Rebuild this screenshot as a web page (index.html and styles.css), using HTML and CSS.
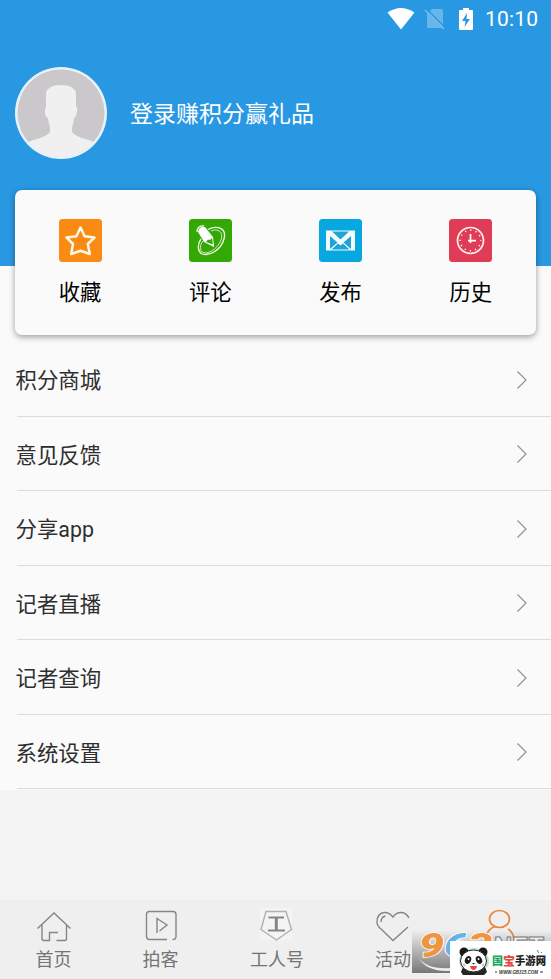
FILE: index.html
```html
<!DOCTYPE html>
<html lang="zh-CN">
<head>
<meta charset="utf-8">
<title>我的</title>
<link rel="stylesheet" href="styles.css">
</head>
<body>
<div class="app">
  <header class="hero">
    <div class="status">
      <svg class="wifi" width="28" height="22" viewBox="0 0 28 22"><path d="M.5 4.500Q14-4.500 27.500 4.500L14 21.500Z" fill="#fff"/></svg>
      <svg class="sim" width="22" height="22" viewBox="0 0 22 22"><path d="M8 1h9q2 0 2 2v17H3V6z" fill="#69b5eb"/><path d="M2.500 1L21.500 20" stroke="#2998e2" stroke-width="1.500"/><path d="M1 2L20 21" stroke="#78b9e9" stroke-width="1.600"/></svg>
      <svg class="battery" width="16" height="24" viewBox="0 0 16 24"><path d="M5 1h6v2h3q1 0 1 1v18q0 1-1 1H2q-1 0-1-1V4q0-1 1-1h3z" fill="#fff"/><path d="M9 6L4 14h3.500L6.500 20 12 12H8.500z" fill="#2998e2"/></svg>
      <span class="time">10:10</span>
    </div>
    <div class="profile">
      <svg class="avatar" width="92" height="92" viewBox="0 0 92 92">
        <defs><clipPath id="face"><circle cx="46" cy="46" r="44"/></clipPath></defs>
        <circle cx="46" cy="46" r="46" fill="#e7f1f8"/>
        <circle cx="46" cy="46" r="43.500" fill="#cbc8cb"/>
        <path clip-path="url(#face)" d="M31 26Q33 18 46 18T61 26V40Q63 40 62 45T59 51Q58 58 57 60V65Q60 69 70 72Q78 74 82 77V92H10V77Q14 74 22 72Q32 69 35 65V60Q34 58 33 51Q30 50 30 45T31 40Z" fill="#f0f0f0"/>
      </svg>
      <span class="login">登录赚积分赢礼品</span>
    </div>
  </header>

  <section class="card">
    <div class="action">
      <svg width="43" height="43" viewBox="0 0 43 43"><rect width="43" height="43" rx="3.500" fill="#f98b12"/><path d="M21.500 8.500L25.600 17.200 35.500 18.500 28.800 25 30.800 35 21.500 31.700 12.200 35 14 25 7.500 18.500 17.400 17.200Z" fill="none" stroke="#fff7e9" stroke-width="2.500" stroke-linejoin="round"/></svg>
      <span>收藏</span>
    </div>
    <div class="action">
      <svg width="43" height="43" viewBox="0 0 43 43"><rect width="43" height="43" rx="3.500" fill="#34a805"/><g fill="none" stroke="#effbe9"><path d="M19 10.500C28 6 38 9 35 20 32 31 20 38 12 34.500 8 31 9 24 12 20" stroke-width="1.300"/><path d="M22 12C29 9 35 13 32 21 28 31 18 36 13 33 10 29 12 24 14 22" stroke-width=".8"/><path d="M8 13Q8 6.500 15 7" stroke-width="1.300"/></g><path d="M9 13Q10 7 16 8L24 18 25 28 15 23Z" fill="#fff"/><path d="M17 23L19 20.500 21 21 23 19 24 25.500Z" fill="#34a805"/><path d="M22.500 25.500L25 24V28Z" fill="#fff"/></svg>
      <span>评论</span>
    </div>
    <div class="action">
      <svg width="43" height="43" viewBox="0 0 43 43"><rect width="43" height="43" rx="3.500" fill="#07a7df"/><path d="M7 11.500h29v20H7z" fill="#f4fbfe"/><path d="M11 17V30L18.500 23.500ZM32 17V30L24.500 23.500ZM13 12.500H30L21.500 20.500ZM12.500 30.500L19 24.500 21.500 26.500 24 24.500 30.500 30.500Z" fill="#20a4d8"/></svg>
      <span>发布</span>
    </div>
    <div class="action">
      <svg width="43" height="43" viewBox="0 0 43 43"><rect width="43" height="43" rx="3.500" fill="#e13c55"/><circle cx="21.500" cy="21.500" r="13" fill="none" stroke="#fff0f1" stroke-width="1.700"/><circle cx="21.500" cy="21.500" r="10.300" fill="none" stroke="#fff" stroke-width="1.500" stroke-dasharray="1.200 4.193" stroke-dashoffset=".6"/><path d="M21.500 15V24M19 21.700H27" stroke="#fff" stroke-width="1.700"/></svg>
      <span>历史</span>
    </div>
  </section>

  <nav class="menu">
    <div class="row"><span>积分商城</span><svg class="chevron" width="12" height="20" viewBox="0 0 12 20"><path d="M1.500 1.500L10 10 1.500 18.500"/></svg></div>
    <div class="row"><span>意见反馈</span><svg class="chevron" width="12" height="20" viewBox="0 0 12 20"><path d="M1.500 1.500L10 10 1.500 18.500"/></svg></div>
    <div class="row"><span>分享app</span><svg class="chevron" width="12" height="20" viewBox="0 0 12 20"><path d="M1.500 1.500L10 10 1.500 18.500"/></svg></div>
    <div class="row"><span>记者直播</span><svg class="chevron" width="12" height="20" viewBox="0 0 12 20"><path d="M1.500 1.500L10 10 1.500 18.500"/></svg></div>
    <div class="row"><span>记者查询</span><svg class="chevron" width="12" height="20" viewBox="0 0 12 20"><path d="M1.500 1.500L10 10 1.500 18.500"/></svg></div>
    <div class="row"><span>系统设置</span><svg class="chevron" width="12" height="20" viewBox="0 0 12 20"><path d="M1.500 1.500L10 10 1.500 18.500"/></svg></div>
  </nav>

  <footer class="tabs">
    <div class="tab"><svg width="36" height="34" viewBox="0 0 36 34"><path d="M1.500 20.500L18 5 34.500 20.500M6 17V30.500Q6 32.500 8 32.500H13.500V24.500H22M30.500 17V30.500Q30.500 32.500 28.500 32.500H20.500"/></svg><span>首页</span></div>
    <div class="tab"><svg width="36" height="34" viewBox="0 0 36 34"><path d="M24 31.500H6.500Q3.500 31.500 3.500 28.500V6.500Q3.500 3.500 6.500 3.500H30Q33 3.500 33 6.500V28.500Q33 31.500 29.500 31.500M14 25V10.500L24 17 16.500 23"/></svg><span>拍客</span></div>
    <div class="tab"><svg width="36" height="34" viewBox="0 0 36 34"><path d="M1 0H33V32H1z" fill="#f4f4f4" stroke="none"/><path d="M7 3.500H27L32.500 21.500 17.500 32 2 21.500Z" stroke="#b0b0b0"/><path d="M9.500 9.500H25M9 22.500H26" stroke-width="2.200"/><path d="M17.300 9.500V22" stroke-width="3"/></svg><span>工人号</span></div>
    <div class="tab"><svg width="36" height="34" viewBox="0 0 36 34"><path d="M34 10Q31 4.500 26 4.500 21 4.500 18 9 14 4 9 4.500 2 5.500 2 14 2 18 6 21L18 32.500 33 19M6 14Q6 9 10.500 8"/></svg><span>活动</span></div>
    <div class="tab mine"><svg width="36" height="34" viewBox="0 0 36 34"><ellipse cx="18.500" cy="11" rx="10" ry="8.500"/><path d="M14 18.500Q8 20.500 6 26M27 21Q32 24 33 31"/></svg></div>
  </footer>

  <div class="mark-963">
    <svg width="139" height="43" viewBox="0 0 139 43">
      <defs><linearGradient id="shade" x1="0" y1="0" x2="0" y2="1"><stop offset="0" stop-color="#777" stop-opacity="0"/><stop offset="1" stop-color="#777"/></linearGradient></defs>
      <path d="M0 0H139V43H0z" fill="url(#shade)"/>
      <path d="M6 27Q16 42 48 37V40Q16 45 6 27Z" fill="#eee"/>
      <g class="digits"><text x="7" y="26.500" fill="#ee963f" textLength="25" lengthAdjust="spacingAndGlyphs">9</text><text x="32" y="26.500" fill="#65b3e5" textLength="25" lengthAdjust="spacingAndGlyphs">6</text><text x="56" y="26.500" fill="#ee963f" textLength="24" lengthAdjust="spacingAndGlyphs">3</text></g>
      <text class="net" x="82" y="25" textLength="50" lengthAdjust="spacingAndGlyphs">NET</text>
    </svg>
  </div>
  <div class="mark-panda">
    <svg width="101" height="38" viewBox="0 0 101 38">
      <ellipse cx="24" cy="20" rx="15" ry="13" fill="#b8e5d8"/>
      <path d="M11 31Q14 21 24 25 34 20 37 31L34 34H13Z" fill="#242725"/>
      <circle cx="14" cy="11" r="4.500" fill="#171c1a"/><circle cx="33" cy="11" r="4.500" fill="#171c1a"/>
      <ellipse cx="23.500" cy="20" rx="13" ry="11" fill="#fff" stroke="#242725"/>
      <ellipse cx="18" cy="19" rx="3" ry="4" fill="#171c1a" transform="rotate(25 18 19)"/><ellipse cx="29" cy="19" rx="3" ry="4" fill="#171c1a" transform="rotate(-25 29 19)"/>
      <circle cx="18.500" cy="18" r="1" fill="#fff"/><circle cx="28.500" cy="18" r="1" fill="#fff"/>
      <path d="M22 22h3l-1.500 1.500z" fill="#171c1a"/><path d="M20 25H27Q26 29 23.500 29T20 25Z" fill="#e94443"/>
      <circle cx="14" cy="24" r="1.500" fill="#f4b5b6"/><circle cx="33" cy="24" r="1.500" fill="#f4b5b6"/>
      <path d="M87 9L89 12M92 11L91 12" stroke="#259d5d"/>
      <g class="brand"><text x="42" y="24" fill="#18a660">国</text><text class="bao" x="53" y="24.500" fill="#e34a3c">宝</text><text x="65" y="24" fill="#222" textLength="31" lengthAdjust="spacingAndGlyphs">手游网</text></g>
      <text class="url" x="49" y="32.500" textLength="39" lengthAdjust="spacingAndGlyphs">WWW.GB315.COM</text>
      <path d="M45 31h2M90 31h3" stroke="#333"/>
    </svg>
  </div>
</div>
</body>
</html>
```
FILE: styles.css
```css
* { box-sizing: border-box; }
body {
  margin: 0;
  font-family: Roboto, "Noto Sans CJK SC", sans-serif;
  background: #f4f4f4;
}
svg { display: block; flex: none; }
.app {
  position: relative;
  display: flex;
  flex-direction: column;
  width: 551px;
  height: 979px;
  overflow: hidden;
  background: #f4f4f4;
}
.hero {
  flex: none;
  height: 266px;
  background: #2998e2;
  color: #fff;
}
.status {
  display: flex;
  justify-content: flex-end;
  align-items: center;
  height: 38px;
  padding-right: 12px;
}
.sim { margin-left: 9px; }
.battery { margin-left: 12px; }
.time {
  width: 54px;
  margin-left: 11px;
  font-size: 21px;
  letter-spacing: 0.2px;
  white-space: nowrap;
}
.profile {
  display: flex;
  align-items: center;
  gap: 23px;
  padding: 29px 15px 0;
}
.login {
  padding-top: 3px;
  font-size: 23px;
  line-height: 30px;
}
.card {
  position: relative;
  flex: none;
  display: flex;
  height: 145px;
  margin: -76px 15px 0;
  padding-top: 29px;
  border-radius: 7px;
  background: #fafafa;
  box-shadow: 0 2px 6px rgba(0, 0, 0, 0.38);
}
.action {
  flex: 1;
  display: flex;
  flex-direction: column;
  align-items: center;
  gap: 15px;
  font-size: 21.300px;
  line-height: 32px;
  color: #000;
}
.menu {
  flex: none;
  margin-top: -69px;
  padding-top: 76.500px;
  background: #fafafa;
}
.row {
  display: flex;
  align-items: center;
  justify-content: space-between;
  height: 74.500px;
  padding: 0 23px 0 15.500px;
  background: linear-gradient(#dcdcdc, #dcdcdc) 17px 100% / 100% 1.200px no-repeat;
  font-size: 21.400px;
  color: #2e2e2e;
}
.row span { padding-bottom: 2px; }
.chevron {
  fill: none;
  stroke: #929292;
  stroke-width: 1.200;
}
.tabs {
  flex: none;
  display: grid;
  grid-template-columns: 107px 107px 126px 106px 105px;
  height: 79px;
  margin-top: auto;
  padding-top: 8px;
  background: #efefef;
  color: #747474;
}
.tab {
  display: flex;
  flex-direction: column;
  align-items: center;
  gap: 5px;
  font-size: 18px;
  line-height: 26px;
}
.tab svg {
  fill: none;
  stroke: #858585;
  stroke-width: 1.400;
}
.tab.mine svg {
  stroke: #e9873e;
  stroke-width: 1.700;
}
.mark-963 {
  position: absolute;
  left: 412px;
  top: 930px;
}
.mark-963 svg { overflow: visible; }
.mark-panda {
  position: absolute;
  left: 450px;
  top: 941px;
  background: #fff;
}
.digits {
  font: italic 900 34px Roboto, sans-serif;
  stroke: #fff;
  stroke-width: 1.500px;
  paint-order: stroke;
}
.net {
  font: 700 25px "Liberation Sans", sans-serif;
  fill: #eee;
  stroke: #777;
  stroke-width: 1px;
}
.brand {
  font: 900 11px "Noto Sans CJK SC", sans-serif;
}
.bao { font-size: 12px; }
.url {
  font: italic 700 5px "Liberation Sans", sans-serif;
  fill: #333;
}
```
